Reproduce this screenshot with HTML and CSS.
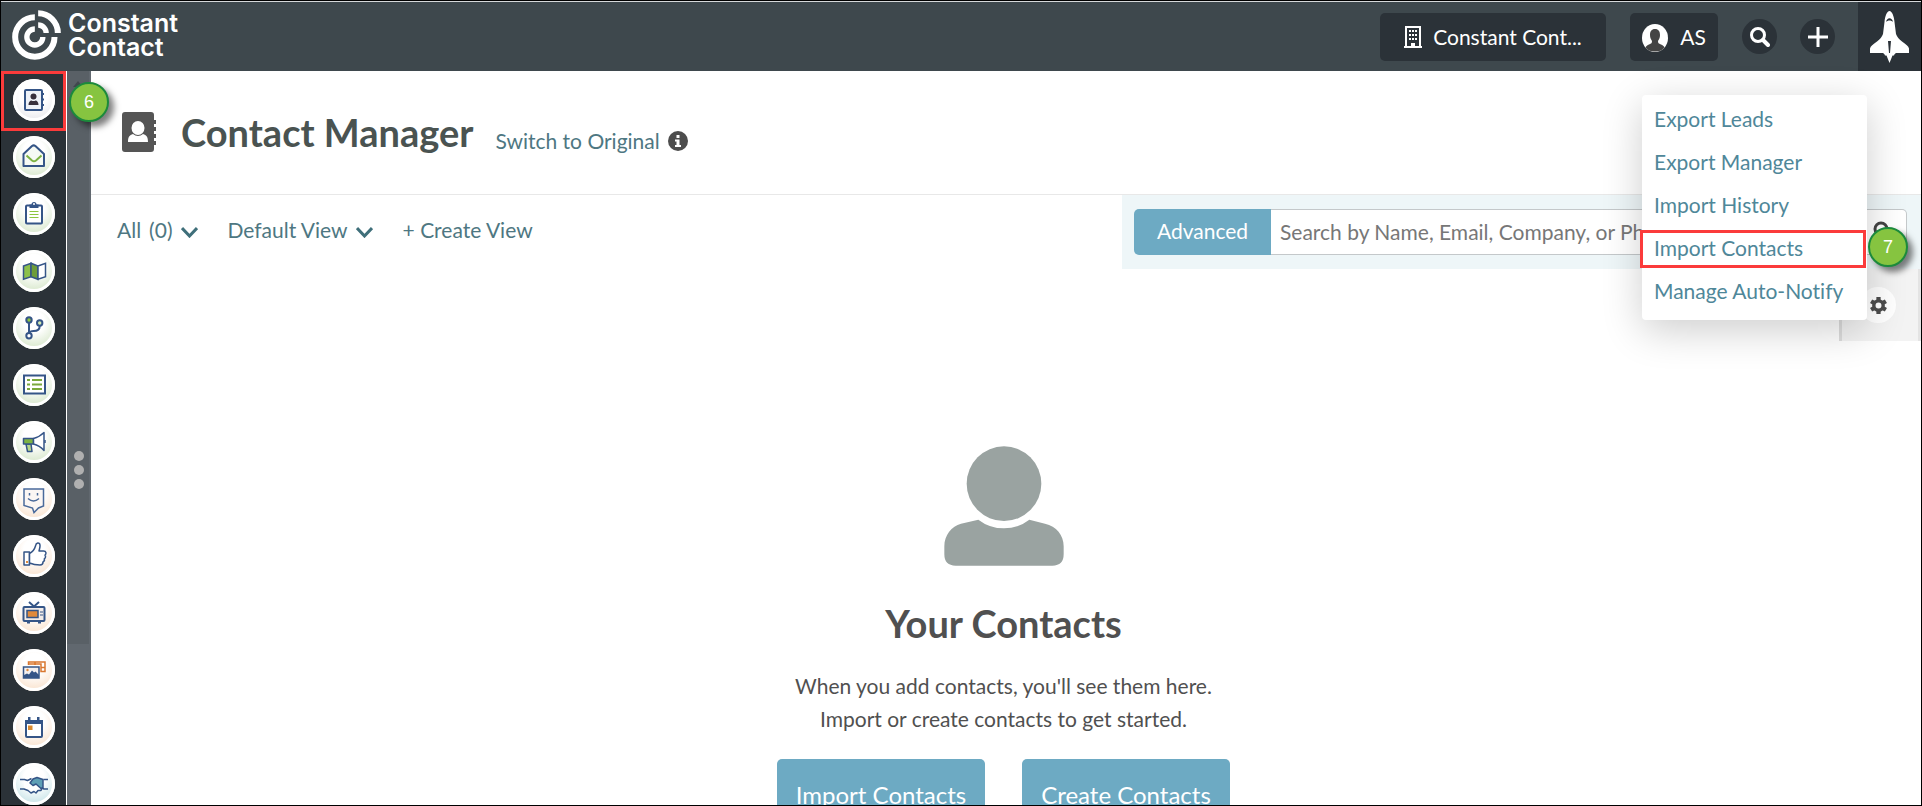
FILE: index.html
```html
<!DOCTYPE html>
<html lang="en">

<head>
  <meta charset="UTF-8">
  <meta name="viewport" content="width=device-width, initial-scale=1.0">
  <title>Contact Manager</title>
  <link rel="stylesheet" href="styles.css">
</head>

<body>
  <header class="topbar">
    <a href="#" class="logo">
      <svg class="logo-mark" viewBox="34 26 152 156" fill="none" stroke="#fff">
        <path d="M105 51A59 59 0 1 0 164 110" stroke-width="18" />
        <path d="M115 39A59 59 0 0 1 174 98" stroke-width="18" />
        <path d="M105 86A24 24 0 1 0 129 110" stroke-width="16" />
        <path d="M115 74A24 24 0 0 1 139 98" stroke-width="16" />
      </svg>
      <span class="logo-text">Constant<br>Contact</span>
    </a>
    <div class="topbar-tools">
      <button type="button" class="tool account">
        <svg class="building" viewBox="0 0 18 22">
          <path fill="#fff" fill-rule="evenodd" d="M1 0h16v20h1v2H0v-2h1zM3 2v18h4v-3h4v3h4V2zM5 4h2v2H5zm3 0h2v2H8zm3 0h2v2h-2zM5 8h2v2H5zm3 0h2v2H8zm3 0h2v2h-2zM5 12h2v2H5zm3 0h2v2H8zm3 0h2v2h-2z" />
        </svg>
        Constant Cont...
      </button>
      <button type="button" class="tool user">
        <svg class="face" viewBox="0 0 26 28">
          <ellipse cx="13" cy="14" rx="13" ry="14" fill="#fff" />
          <path fill="#444" d="M13 5c3.500 0 5 2.500 5 6 0 3-1 4.500-2 6 0 2 .500 2.500 3 3.500 1.500.500 3 1.500 3.500 3C20 26.500 17 27.500 13 27.500S6 26.500 3.500 23.500c.500-1.500 2-2.500 3.500-3 2.500-1 3-1.500 3-3.500-1-1.500-2-3-2-6 0-3.500 1.500-6 5-6z" />
        </svg>
        AS
      </button>
      <button type="button" class="round" aria-label="Search">
        <svg viewBox="0 0 20 20" fill="none" stroke="#fff">
          <circle cx="8" cy="8" r="6.500" stroke-width="3" />
          <path d="M13 13l5 5" stroke-width="4" stroke-linecap="round" />
        </svg>
      </button>
      <button type="button" class="round" aria-label="Add">
        <svg viewBox="0 0 20 20" fill="none" stroke="#fff" stroke-width="3">
          <path d="M10 0v20M0 10h20" />
        </svg>
      </button>
      <a href="#" class="shuttle" aria-label="What's new">
        <svg viewBox="0 0 39 52">
          <path fill="#fff" d="M19.500 0c2.500 0 4.500 5 5 11l1.500 12c1 3 3 5 6 7.500 4 3 6.500 4.500 7 7V42H26c-1 .500-1.500 1-2 2.500h-1.500l-3 7.500-3-7.500H15c-.500-1.500-1-2-2-2.500H0v-4.500c.500-2.500 3-4 7-7 3-2.500 5-4.500 6-7.500l1.500-12c.500-6 2.500-11 5-11z" />
          <path fill="#2b3238" d="M16 11c1-5 6-5 7 0-2-2-5-2-7 0zM18 30h3l-1 12h-1z" />
        </svg>
      </a>
    </div>
  </header>

  <div class="layout">
    <nav class="sidebar" aria-label="Main">
      <a href="#" class="nav-item active" aria-label="Contacts">
        <svg class="nav-icon" viewBox="0 0 42 42">
          <rect x="12" y="11" width="17" height="20" rx="1" fill="#eef2f8" stroke="#355587" stroke-width="2" />
          <path stroke="#355587" stroke-width="2" d="M29 15h2M29 20.500h2M29 26h2" />
          <circle cx="20.500" cy="17.500" r="3" fill="#37303c" />
          <path fill="#37303c" d="M15.500 26c0-3 1.500-4.500 3-4.500 1 .7 3 .7 4 0 1.500 0 3 1.500 3 4.500z" />
        </svg>
        <span class="badge badge-nav">6</span>
      </a>
      <a href="#" class="nav-item" aria-label="Email">
        <svg class="nav-icon green" viewBox="0 0 42 42" fill="none">
          <path fill="#f6faf4" stroke="#355587" stroke-width="2" stroke-linejoin="round" d="M10.500 18l8.500-8q1.700-1.300 3.400 0l8.600 8v12H10.500z" />
          <path stroke="#7db343" stroke-width="2" d="M13.500 19.500l5.500 5q2 1.500 4 0l5.500-5" />
        </svg>
      </a>
      <a href="#" class="nav-item" aria-label="Forms">
        <svg class="nav-icon green" viewBox="0 0 42 42">
          <rect x="13" y="12.500" width="16" height="18" rx="1" fill="#fff" stroke="#355587" stroke-width="2" />
          <path fill="#355587" d="M16.500 11.500h2a2.500 2.500 0 0 1 5 0h2V15h-9z" />
          <circle cx="21" cy="11" r="1" fill="#fff" />
          <path stroke="#8cc63f" stroke-width="1" d="M16.500 18.500h9M16.500 21.500h9M16.500 24.500h9" />
        </svg>
      </a>
      <a href="#" class="nav-item" aria-label="Journeys">
        <svg class="nav-icon green" viewBox="0 0 42 42" stroke="#355587" stroke-width="1.500">
          <path fill="#8cc04b" d="M10.500 16l7.500-2.700v13.400l-7.500 2.600z" />
          <path fill="#6d9c3a" d="M18 13.300l7 2.700v13.300l-7-2.600z" />
          <path fill="#fff" d="M25 16l7.500-2.700v13.400L25 29.300z" />
        </svg>
      </a>
      <a href="#" class="nav-item" aria-label="Automations">
        <svg class="nav-icon green" viewBox="0 0 42 42" fill="none" stroke="#355587" stroke-width="2">
          <path d="M16 16v10M26.700 19c0 4-2.700 5-6 5-2.500 0-4 .5-4.700 2" />
          <circle cx="16" cy="13" r="2.700" fill="#8cc63f" />
          <circle cx="26.700" cy="16" r="2.700" fill="#cfe8b0" />
          <circle cx="16" cy="28.700" r="2.700" fill="#fff" />
        </svg>
      </a>
      <a href="#" class="nav-item" aria-label="Lists">
        <svg class="nav-icon green" viewBox="0 0 42 42" fill="none">
          <rect x="11" y="11.500" width="21" height="18" fill="#fff" stroke="#355587" stroke-width="2" />
          <path stroke="#7aa83c" stroke-width="2" d="M14 16h3M19 16h10M14 20.500h3M19 20.500h10M14 25h3M19 25h10" />
        </svg>
      </a>
      <a href="#" class="nav-item" aria-label="Campaigns">
        <svg class="nav-icon green" viewBox="0 0 42 42" stroke="#355587" stroke-width="1.500" stroke-linejoin="round">
          <path fill="#b7d88a" d="M13 23l1.500 7.500H19l-1-7.500z" />
          <path fill="#7db343" d="M10.500 17.500h10V23h-10z" />
          <path fill="#fff" d="M20.500 17.500q6-1.500 10.500-6v18q-4.500-5-10.500-6.500z" />
          <path fill="none" d="M32 19v3" />
        </svg>
      </a>
      <a href="#" class="nav-item" aria-label="Social">
        <svg class="nav-icon orange" viewBox="0 0 42 42" fill="none" stroke="#4a6a9b" stroke-width="1.500">
          <path fill="#fbf6f4" d="M11 11h19.500v17l-5 2-4.500 4.500-1.500-4.500-8.500-2.500z" />
          <path d="M15 20.500q5.500 5 11 0M16.500 15v2.500M24.500 15v2.500" />
        </svg>
      </a>
      <a href="#" class="nav-item" aria-label="Reviews">
        <svg class="nav-icon orange" viewBox="0 0 42 42" fill="#fff" stroke="#355587" stroke-width="1.500" stroke-linejoin="round">
          <path d="M11 17h5.500v13H11z" />
          <path d="M16.500 18.500c3-1.500 5-4 6-7.500.5-3.500 4-4 4.500-1 .3 2-.5 4-1 6h4.500c3 0 3 3 1.500 4 1 1.500.5 3-.7 3.800.5 1.500-.3 2.700-1.300 3.200 0 2-1 3-3 3-4 0-7-.5-10.500-2z" />
          <path fill="#e08a3c" stroke="none" d="M13 26h2v2h-2z" />
        </svg>
      </a>
      <a href="#" class="nav-item" aria-label="Media">
        <svg class="nav-icon orange" viewBox="0 0 42 42" fill="none" stroke="#355587" stroke-width="2">
          <path d="M16 10l5 4.500 5-4.500M14 30.500h3M25 30.500h3" />
          <rect x="10.500" y="15" width="21" height="14" rx="1" fill="#f3ece8" />
          <rect x="14" y="18.500" width="11" height="7" fill="#e08a3c" stroke-width="1.500" />
          <path stroke-width="1" d="M27 20h3M27 23h3" />
        </svg>
      </a>
      <a href="#" class="nav-item" aria-label="Images">
        <svg class="nav-icon orange" viewBox="0 0 42 42" fill="none">
          <path stroke="#d9772f" stroke-width="1.500" d="M15.500 16v-3H32v9.500h-4V15H16M22 13v3M28 18.500h4" />
          <rect x="10.500" y="18" width="15.500" height="11" fill="#f4f0f0" stroke="#355587" stroke-width="1.500" />
          <path fill="#355587" d="M11 29v-3l3-1.500 2 1 3-4 2 2 1.500-1L26 26v3z" />
          <circle cx="14.500" cy="21" r="1.200" fill="#e08a3c" />
        </svg>
      </a>
      <a href="#" class="nav-item" aria-label="Calendar">
        <svg class="nav-icon orange" viewBox="0 0 42 42">
          <rect x="13" y="15" width="16" height="16" rx="1" fill="#fff" stroke="#355587" stroke-width="2" />
          <path fill="#355587" d="M12 14h18v4H12zM15 11h2.500v4H15zM24 11h2.500v4H24z" />
          <path fill="#d98a2f" d="M15 19.500h4.500V24H15z" />
        </svg>
      </a>
      <a href="#" class="nav-item" aria-label="Partners">
        <svg class="nav-icon blue" viewBox="0 0 42 42" stroke="#355587" stroke-width="1.500" stroke-linejoin="round">
          <path fill="#fff" stroke="none" d="M11 16l9-2 5 0 6 2v9l-4 1-6 4-5-2-5-3z" />
          <path fill="none" d="M7 16.500h4.500l3 1 4-2M7 26h4l4 1.500 3 2.500 3-1.500 2 1.500 2-2.500 3 0 1-2.500 2 1h4M35 16.500h-4.500" />
          <path fill="#5e9fb5" d="M17 20l3-4 4-1.500 6 2v8l-2 1-5-4.500-3 1.500z" />
        </svg>
      </a>
    </nav>

    <div class="rail">
      <div class="rail-thumb">
        <svg class="rail-arrow" viewBox="0 0 10 6"><path fill="#41484e" d="M5 0l5 6H0z" /></svg>
      </div>
      <div class="rail-grip"><i></i><i></i><i></i></div>
    </div>

    <main class="main">
      <div class="page-head">
        <svg class="head-icon" viewBox="0 0 34 40">
          <path fill="#555" d="M3 0h26q3 0 3 3v5h2v4h-2v3h2v4h-2v3h2v4h-2v3h2v4h-2v4q0 3-3 3H3q-3 0-3-3V3q0-3 3-3z" />
          <ellipse cx="16" cy="16" rx="6.500" ry="7" fill="#fff" />
          <path fill="#fff" d="M6 30c0-5 1.500-7 5-8 3 2.500 7 2.500 10 0 3.500 1 5 3 5 8z" />
        </svg>
        <h1 class="title">Contact Manager</h1>
        <a href="#" class="switch">Switch to Original
          <svg class="info" viewBox="0 0 20 20">
            <circle cx="10" cy="10" r="10" fill="#4d4d4d" />
            <path fill="#fff" d="M8.500 4h3v3h-3zM7 8.500h4.500V14H13v2H7v-2h1.500v-3.500H7z" />
          </svg>
        </a>
      </div>

      <div class="toolbar">
        <div class="views">
          <button type="button" class="view">All <span class="count">(0)</span>
            <svg class="chevron" viewBox="0 0 17 12"><path d="M1 2l7.500 8L16 2" /></svg>
          </button>
          <button type="button" class="view">Default View
            <svg class="chevron" viewBox="0 0 17 12"><path d="M1 2l7.500 8L16 2" /></svg>
          </button>
          <a href="#" class="view">+ Create View</a>
        </div>
        <form class="search">
          <button type="button" class="advanced">Advanced</button>
          <input type="text" class="search-input" aria-label="Search contacts" placeholder="Search by Name, Email, Company, or Phone">
          <button type="submit" class="search-go" aria-label="Search">
            <svg viewBox="0 0 20 20" fill="none" stroke="#444" stroke-width="3">
              <circle cx="8" cy="8" r="6" />
              <path d="M12 12l6 6" />
            </svg>
          </button>
        </form>
      </div>

      <div class="settings">
        <button type="button" class="gear" aria-label="Settings">
          <svg viewBox="-10 -10 20 20" fill="none" stroke="#4d4d4d">
            <circle r="5.500" stroke-width="4" />
            <path stroke-width="5" d="M0 -10V-6M0 10V6M-8.700 -5L-5.200 -3M8.700 5L5.200 3M-8.700 5L-5.200 3M8.700 -5L5.200 -3" />
          </svg>
        </button>
      </div>

      <section class="empty">
        <svg class="avatar" viewBox="552 48 360 360" fill="#9aa3a1">
          <circle cx="732" cy="161" r="112" />
          <path d="M655 269q34 26 77 26t76-26l47 12c34 8 56 34 56 68v24q0 34-34 34H587q-34 0-34-34v-24c0-34 22-60 50-68z" />
        </svg>
        <h2 class="title">Your Contacts</h2>
        <p class="hint">When you add contacts, you'll see them here.<br>Import or create contacts to get started.</p>
        <div class="actions">
          <button type="button" class="action">Import Contacts</button>
          <button type="button" class="action">Create Contacts</button>
        </div>
      </section>

      <ul class="menu">
        <li><a href="#">Export Leads</a></li>
        <li><a href="#">Export Manager</a></li>
        <li><a href="#">Import History</a></li>
        <li class="marked"><a href="#">Import Contacts</a><span class="badge badge-menu">7</span></li>
        <li><a href="#">Manage Auto-Notify</a></li>
      </ul>
    </main>
  </div>
</body>

</html>
```

FILE: styles.css
```css
* {
  box-sizing: border-box;
}

body {
  margin: 0;
  height: 100vh;
  display: flex;
  flex-direction: column;
  overflow: hidden;
  border: 1px solid #000;
  background: #fff;
  color: #505050;
  font-family: Lato, "Liberation Sans", sans-serif;
  font-size: 21px;
  font-variant-ligatures: none;
}

a {
  color: inherit;
  text-decoration: none;
}

button {
  border: 0;
  padding: 0;
  background: none;
  color: inherit;
  font: inherit;
  font-variant-ligatures: none;
  cursor: pointer;
}

svg {
  display: block;
  flex: none;
}

/* top bar */

.topbar {
  flex: none;
  display: flex;
  justify-content: space-between;
  height: 70px;
  border-top: 1px solid #d5d8da;
  background: #3e484d;
  color: #fff;
}

.logo {
  display: flex;
  align-items: center;
  gap: 6px;
  padding-left: 10px;
  padding-bottom: 3px;
}

.logo-mark {
  width: 51px;
  height: 52px;
}

.logo-text {
  font-family: Inter, Lato, sans-serif;
  font-size: 25px;
  font-weight: 600;
  line-height: 24px;
}

.topbar-tools {
  display: flex;
  align-items: center;
}

.tool {
  display: flex;
  align-items: center;
  justify-content: center;
  height: 48px;
  margin-right: 24px;
  border-radius: 5px;
  background: #2b3238;
}

.account {
  width: 226px;
  gap: 11px;
}

.building {
  width: 18px;
  height: 22px;
}

.user {
  width: 88px;
  gap: 12px;
}

.face {
  width: 26px;
  height: 28px;
  margin-top: 3px;
}

.round {
  display: flex;
  align-items: center;
  justify-content: center;
  width: 35px;
  height: 35px;
  margin-right: 23px;
  border-radius: 50%;
  background: #2b3238;
}

.round svg {
  width: 20px;
  height: 20px;
}

.shuttle {
  align-self: stretch;
  display: flex;
  align-items: center;
  justify-content: center;
  width: 63px;
  background: #2b3238;
}

.shuttle svg {
  width: 39px;
  height: 52px;
}

/* side bar */

.layout {
  flex: 1;
  display: flex;
  min-height: 0;
}

.sidebar {
  flex: none;
  width: 66px;
  border-right: 1px solid #fff;
  background: #2b3238;
}

.nav-item {
  position: relative;
  display: flex;
  align-items: center;
  justify-content: center;
  height: 57px;
}

.nav-item.active {
  height: 60px;
  margin-bottom: -3px;
  padding-bottom: 2px;
  border: 3px solid #fb3b3b;
}

.nav-icon {
  width: 42px;
  height: 42px;
  border-radius: 50%;
  background: radial-gradient(circle at 50% 35%, #fff 40%, #dcdce2);
  box-shadow: inset 0 0 0 3px #fff;
}

.nav-icon.green {
  background: radial-gradient(circle at 50% 35%, #fff 30%, #c6ddb4);
}

.nav-icon.orange {
  background: radial-gradient(circle at 50% 35%, #fff 30%, #f7d6b8);
}

.nav-icon.blue {
  background: radial-gradient(circle at 50% 35%, #fff 30%, #aed6dc);
}

.rail {
  position: relative;
  flex: none;
  width: 24px;
  background: #61686f;
}

.rail-thumb {
  width: 22px;
  height: 78%;
  padding: 10px 0 0 6px;
  background: #596066;
}

.rail-arrow {
  width: 10px;
  height: 6px;
}

.rail-grip {
  position: absolute;
  top: 380px;
  left: 7px;
  display: grid;
  gap: 4px;
}

.rail-grip i {
  width: 10px;
  height: 10px;
  border-radius: 50%;
  background: #b0b0b0;
}

.badge {
  position: absolute;
  z-index: 3;
  width: 40px;
  height: 40px;
  border: 2px solid #1c8a3c;
  border-radius: 50%;
  background: #86c440;
  box-shadow: 5px 5px 6px rgba(0, 0, 0, .5);
  color: #fff;
  font-family: "Liberation Sans", sans-serif;
  font-size: 18px;
  line-height: 37px;
  text-align: center;
}

.badge-nav {
  top: 8px;
  left: 65px;
}

.badge-menu {
  top: 1px;
  right: -41px;
}

/* page */

.main {
  position: relative;
  flex: 1;
  min-width: 0;
}

.page-head {
  display: flex;
  align-items: center;
  height: 124px;
  padding: 0 31px 1px;
  border-bottom: 1px solid #e8e8e8;
}

.head-icon {
  width: 34px;
  height: 40px;
}

.title {
  margin: 0;
  font-size: 38px;
  font-weight: 700;
  line-height: 46px;
}

.page-head .title {
  margin: 0 22px 0 25px;
  color: #4a5351;
}

.switch {
  display: flex;
  align-items: center;
  gap: 8px;
  padding-top: 17px;
  color: #4e7782;
}

.info {
  width: 20px;
  height: 20px;
}

.toolbar {
  display: flex;
  justify-content: space-between;
  height: 74px;
}

.views {
  display: flex;
  align-items: center;
  gap: 30px;
  padding: 0 0 5px 26px;
  color: #4e7782;
}

.view {
  display: flex;
  align-items: center;
  gap: 8px;
}

.chevron {
  width: 17px;
  height: 12px;
  margin-top: 5px;
  fill: none;
  stroke: #3f6f7a;
  stroke-width: 3;
}

.search {
  display: flex;
  align-items: center;
  width: 799px;
  padding: 0 14px 0 12px;
  background: #eef6f8;
}

.advanced {
  width: 137px;
  height: 46px;
  padding-bottom: 3px;
  border-radius: 5px 0 0 5px;
  background: #6daac3;
  color: #fff;
}

.search-input {
  flex: 1;
  min-width: 0;
  height: 46px;
  padding: 0 9px 2px;
  border: 1px solid #c4c8ca;
  border-width: 1px 0;
  background: #fff;
  color: #505050;
  font: inherit;
}

.search-input::placeholder {
  color: #777;
  opacity: 1;
}

.search-go {
  width: 48px;
  height: 46px;
  padding: 0 0 3px 14px;
  border: 1px solid #c4c8ca;
  border-left: 0;
  border-radius: 0 5px 5px 0;
  background: #fff;
}

.search-go svg {
  width: 20px;
  height: 20px;
}

.settings {
  display: flex;
  align-items: center;
  justify-content: center;
  width: 82px;
  height: 72px;
  margin-left: auto;
  padding-right: 4px;
  border-left: 3px solid #ddd;
  border-right: 3px solid #e4e4e4;
  background: #f3f3f3;
}

.gear {
  display: flex;
  align-items: center;
  justify-content: center;
  width: 36px;
  height: 36px;
  border-radius: 50%;
  background: #fff;
}

.gear svg {
  width: 17px;
  height: 17px;
}

.empty {
  display: flex;
  flex-direction: column;
  align-items: center;
  padding: 105px 5px 0 0;
}

.avatar {
  width: 120px;
  height: 120px;
}

.empty .title {
  margin-top: 34px;
}

.hint {
  margin: 23px 0 24px;
  line-height: 33px;
  text-align: center;
}

.actions {
  display: flex;
  gap: 37px;
}

.action {
  width: 208px;
  height: 70px;
  border-radius: 5px;
  background: #6daac3;
  color: #fff;
  font-size: 24px;
}

/* drop-down menu */

.menu {
  position: absolute;
  top: 24px;
  right: 54px;
  z-index: 2;
  width: 225px;
  margin: 0;
  padding: 2px 0 8px;
  border-radius: 4px;
  background: #fff;
  box-shadow: 0 10px 40px rgba(0, 0, 0, .2);
  color: #4f8799;
  list-style: none;
}

.menu li {
  position: relative;
}

.menu a {
  display: block;
  padding: 0 12px;
  line-height: 43px;
}

.menu .marked::before {
  content: '';
  position: absolute;
  inset: 4px 1px 1px -2px;
  border: 3px solid #fb3b3b;
  pointer-events: none;
}
```
